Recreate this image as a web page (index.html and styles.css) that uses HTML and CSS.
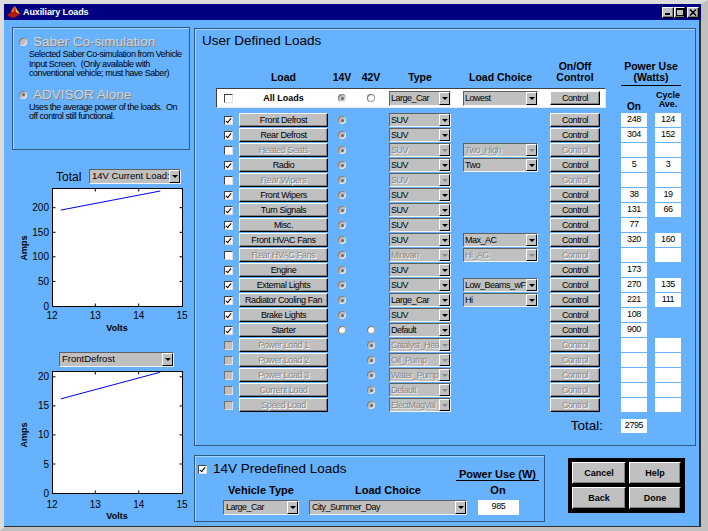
FILE: index.html
```html
<!DOCTYPE html>
<html lang="en">
<head>
<meta charset="utf-8">
<title>Auxiliary Loads</title>
<link rel="stylesheet" href="styles.css">
</head>
<body>
<div class="window">
  <header class="titlebar">
    <svg class="app-icon" width="13" height="12" viewBox="0 0 13 12">
      <polygon points="0,9 4,6 6,2 8,0 10,4 13,8 9,11 5,12" fill="#b01808"/>
      <polygon points="4,6 6,2 8,0 7,6" fill="#f07020"/>
      <polygon points="8,0 10,4 13,8 9,6" fill="#ffd040"/>
    </svg>
    <span class="title-text">Auxiliary Loads</span>
    <div class="wbtns">
      <span class="wbtn wmin"></span>
      <span class="wbtn wmax"></span>
      <span class="wbtn wclose"><svg width="8" height="7" viewBox="0 0 8 7"><path d="M1 0.5 L7 6.5 M7 0.5 L1 6.5" stroke="#000" stroke-width="1.6"/></svg></span>
    </div>
  </header>

  <main class="client">
    <aside class="leftcol">
      <div class="frame mode-box">
        <div class="mode-row"><span class="rd"></span><span class="mode-label">Saber Co-simulation</span></div>
        <p class="mode-desc">Selected Saber Co-simulation from Vehicle<br>Input Screen.&nbsp; (Only available with<br>conventional vehicle; must have Saber)</p>
        <div class="mode-row second"><span class="rd sel"></span><span class="mode-label">ADVISOR Alone</span></div>
        <p class="mode-desc">Uses the average power of the loads.&nbsp; On<br>off control still functional.</p>
      </div>

      <div class="chart-head">
        <span class="chart-label">Total</span>
        <div class="dd dd-left dd-total"><span class="dd-t">14V Current Load:</span><span class="dd-b"></span></div>
      </div>
      <svg class="chart" width="186" height="150" viewBox="0 0 186 150">
        <rect x="48.5" y="4.5" width="130" height="118" fill="#fff" stroke="#000"/>
        <g stroke="#000">
          <path d="M91.3 122 V119.5 M134.7 122 V119.5 M91.3 5 V7.5 M134.7 5 V7.5"/>
          <path d="M49 97.4 H51.5 M49 72.8 H51.5 M49 48.3 H51.5 M49 23.7 H51.5 M178 97.4 H175.5 M178 72.8 H175.5 M178 48.3 H175.5 M178 23.7 H175.5"/>
        </g>
        <polyline points="56.7,26.1 156.3,7" fill="none" stroke="#0000ff" stroke-width="1"/>
        <g class="tick" text-anchor="end">
          <text x="45" y="125.5">0</text>
          <text x="45" y="101">50</text>
          <text x="45" y="76.3">100</text>
          <text x="45" y="51.7">150</text>
          <text x="45" y="27.2">200</text>
        </g>
        <g class="tick" text-anchor="middle">
          <text x="48" y="135">12</text>
          <text x="91.3" y="135">13</text>
          <text x="134.7" y="135">14</text>
          <text x="178" y="135">15</text>
        </g>
        <text class="axis-label" x="113" y="146.5" text-anchor="middle">Volts</text>
        <text class="axis-label" transform="translate(23,64) rotate(-90)" text-anchor="middle">Amps</text>
      </svg>

      <div class="dd dd-left dd-load"><span class="dd-t">FrontDefrost</span><span class="dd-b"></span></div>
      <svg class="chart" width="186" height="159" viewBox="0 0 186 159">
        <rect x="48.5" y="4.5" width="130" height="122" fill="#fff" stroke="#000"/>
        <g stroke="#000">
          <path d="M91.3 126 V123.5 M134.7 126 V123.5 M91.3 5 V7.5 M134.7 5 V7.5"/>
          <path d="M49 97 H51.5 M49 67.9 H51.5 M49 38.9 H51.5 M49 9.8 H51.5 M178 97 H175.5 M178 67.9 H175.5 M178 38.9 H175.5 M178 9.8 H175.5"/>
        </g>
        <polyline points="56.7,31.9 156.3,5.2" fill="none" stroke="#0000ff" stroke-width="1"/>
        <g class="tick" text-anchor="end">
          <text x="45" y="129.5">0</text>
          <text x="45" y="100.5">5</text>
          <text x="45" y="71.4">10</text>
          <text x="45" y="42.4">15</text>
          <text x="45" y="13.3">20</text>
        </g>
        <g class="tick" text-anchor="middle">
          <text x="48" y="141">12</text>
          <text x="91.3" y="141">13</text>
          <text x="134.7" y="141">14</text>
          <text x="178" y="141">15</text>
        </g>
        <text class="axis-label" x="113" y="152" text-anchor="middle">Volts</text>
        <text class="axis-label" transform="translate(23,68) rotate(-90)" text-anchor="middle">Amps</text>
      </svg>
    </aside>

    <section class="rightcol">
      <div class="frame udl">
        <h1 class="panel-title">User Defined Loads</h1>
        <div class="loads">
          <div class="grow thead">
            <span class="h-load">Load</span>
            <span class="h-14">14V</span>
            <span class="h-42">42V</span>
            <span class="h-type">Type</span>
            <span class="h-choice">Load Choice</span>
            <span class="h-ctl">On/Off<br>Control</span>
            <span class="h-power">Power Use<br>(Watts)</span>
          </div>
          <div class="grow allrow">
            <span class="allbox"></span>
            <span class="cb"></span>
            <span class="all-label">All Loads</span>
            <span class="rd r14 sel"></span>
            <span class="rd r42 empty"></span>
            <div class="dd type"><span class="dd-t">Large_Car</span><span class="dd-b"></span></div>
            <div class="dd choice"><span class="dd-t">Lowest</span><span class="dd-b"></span></div>
            <span class="btn ctl">Control</span>
            <span class="h-on">On</span>
            <span class="h-cyc">Cycle<br>Ave.</span>
          </div>

          <div class="grow trow">
            <span class="cb chk"></span><span class="btn load">Front Defrost</span><span class="rd r14 sel"></span>
            <div class="dd type"><span class="dd-t">SUV</span><span class="dd-b"></span></div>
            <span class="btn ctl">Control</span><span class="fld on">248</span><span class="fld cyc">124</span>
          </div>
          <div class="grow trow">
            <span class="cb chk"></span><span class="btn load">Rear Defrost</span><span class="rd r14 sel"></span>
            <div class="dd type"><span class="dd-t">SUV</span><span class="dd-b"></span></div>
            <span class="btn ctl">Control</span><span class="fld on">304</span><span class="fld cyc">152</span>
          </div>
          <div class="grow trow">
            <span class="cb"></span><span class="btn load dis">Heated Seats</span><span class="rd r14 sel"></span>
            <div class="dd type dis"><span class="dd-t">SUV</span><span class="dd-b"></span></div>
            <div class="dd choice dis"><span class="dd-t">Two_High</span><span class="dd-b"></span></div>
            <span class="btn ctl dis">Control</span><span class="fld on"></span><span class="fld cyc"></span>
          </div>
          <div class="grow trow">
            <span class="cb chk"></span><span class="btn load">Radio</span><span class="rd r14 sel"></span>
            <div class="dd type"><span class="dd-t">SUV</span><span class="dd-b"></span></div>
            <div class="dd choice"><span class="dd-t">Two</span><span class="dd-b"></span></div>
            <span class="btn ctl">Control</span><span class="fld on">5</span><span class="fld cyc">3</span>
          </div>
          <div class="grow trow">
            <span class="cb"></span><span class="btn load dis">Rear Wipers</span><span class="rd r14 sel"></span>
            <div class="dd type dis"><span class="dd-t">SUV</span><span class="dd-b"></span></div>
            <span class="btn ctl dis">Control</span><span class="fld on"></span><span class="fld cyc"></span>
          </div>
          <div class="grow trow">
            <span class="cb chk"></span><span class="btn load">Front Wipers</span><span class="rd r14 sel"></span>
            <div class="dd type"><span class="dd-t">SUV</span><span class="dd-b"></span></div>
            <span class="btn ctl">Control</span><span class="fld on">38</span><span class="fld cyc">19</span>
          </div>
          <div class="grow trow">
            <span class="cb chk"></span><span class="btn load">Turn Signals</span><span class="rd r14 sel"></span>
            <div class="dd type"><span class="dd-t">SUV</span><span class="dd-b"></span></div>
            <span class="btn ctl">Control</span><span class="fld on">131</span><span class="fld cyc">66</span>
          </div>
          <div class="grow trow">
            <span class="cb chk"></span><span class="btn load">Misc.</span><span class="rd r14 sel"></span>
            <div class="dd type"><span class="dd-t">SUV</span><span class="dd-b"></span></div>
            <span class="btn ctl">Control</span><span class="fld on">77</span>
          </div>
          <div class="grow trow">
            <span class="cb chk"></span><span class="btn load">Front HVAC Fans</span><span class="rd r14 sel"></span>
            <div class="dd type"><span class="dd-t">SUV</span><span class="dd-b"></span></div>
            <div class="dd choice"><span class="dd-t">Max_AC</span><span class="dd-b"></span></div>
            <span class="btn ctl">Control</span><span class="fld on">320</span><span class="fld cyc">160</span>
          </div>
          <div class="grow trow">
            <span class="cb"></span><span class="btn load dis">Rear HVAC Fans</span><span class="rd r14 sel"></span>
            <div class="dd type dis"><span class="dd-t">Minivan</span><span class="dd-b"></span></div>
            <div class="dd choice dis"><span class="dd-t">Hi_AC</span><span class="dd-b"></span></div>
            <span class="btn ctl dis">Control</span><span class="fld on"></span><span class="fld cyc"></span>
          </div>
          <div class="grow trow">
            <span class="cb chk"></span><span class="btn load">Engine</span><span class="rd r14 sel"></span>
            <div class="dd type"><span class="dd-t">SUV</span><span class="dd-b"></span></div>
            <span class="btn ctl">Control</span><span class="fld on">173</span>
          </div>
          <div class="grow trow">
            <span class="cb chk"></span><span class="btn load">External Lights</span><span class="rd r14 sel"></span>
            <div class="dd type"><span class="dd-t">SUV</span><span class="dd-b"></span></div>
            <div class="dd choice"><span class="dd-t">Low_Beams_wF</span><span class="dd-b"></span></div>
            <span class="btn ctl">Control</span><span class="fld on">270</span><span class="fld cyc">135</span>
          </div>
          <div class="grow trow">
            <span class="cb chk"></span><span class="btn load">Radiator Cooling Fan</span><span class="rd r14 sel"></span>
            <div class="dd type"><span class="dd-t">Large_Car</span><span class="dd-b"></span></div>
            <div class="dd choice"><span class="dd-t">Hi</span><span class="dd-b"></span></div>
            <span class="btn ctl">Control</span><span class="fld on">221</span><span class="fld cyc">111</span>
          </div>
          <div class="grow trow">
            <span class="cb chk"></span><span class="btn load">Brake Lights</span><span class="rd r14 sel"></span>
            <div class="dd type"><span class="dd-t">SUV</span><span class="dd-b"></span></div>
            <span class="btn ctl">Control</span><span class="fld on">108</span>
          </div>
          <div class="grow trow">
            <span class="cb chk"></span><span class="btn load">Starter</span><span class="rd r14 empty"></span><span class="rd r42 empty"></span>
            <div class="dd type"><span class="dd-t">Default</span><span class="dd-b"></span></div>
            <span class="btn ctl">Control</span><span class="fld on">900</span>
          </div>
          <div class="grow trow">
            <span class="cb off"></span><span class="btn load dis">Power Load 1</span><span class="rd r42 sel"></span>
            <div class="dd type dis"><span class="dd-t">Catalyst_Hea</span><span class="dd-b"></span></div>
            <span class="btn ctl dis">Control</span><span class="fld on"></span><span class="fld cyc"></span>
          </div>
          <div class="grow trow">
            <span class="cb off"></span><span class="btn load dis">Power Load 2</span><span class="rd r42 sel"></span>
            <div class="dd type dis"><span class="dd-t">Oil_Pump</span><span class="dd-b"></span></div>
            <span class="btn ctl dis">Control</span><span class="fld on"></span><span class="fld cyc"></span>
          </div>
          <div class="grow trow">
            <span class="cb off"></span><span class="btn load dis">Power Load 3</span><span class="rd r42 sel"></span>
            <div class="dd type dis"><span class="dd-t">Water_Pump</span><span class="dd-b"></span></div>
            <span class="btn ctl dis">Control</span><span class="fld on"></span><span class="fld cyc"></span>
          </div>
          <div class="grow trow">
            <span class="cb off"></span><span class="btn load dis">Current Load</span><span class="rd r42 sel"></span>
            <div class="dd type dis"><span class="dd-t">Default</span><span class="dd-b"></span></div>
            <span class="btn ctl dis">Control</span><span class="fld on"></span><span class="fld cyc"></span>
          </div>
          <div class="grow trow">
            <span class="cb off"></span><span class="btn load dis">Speed Load</span><span class="rd r42 sel"></span>
            <div class="dd type dis"><span class="dd-t">ElectMagVal</span><span class="dd-b"></span></div>
            <span class="btn ctl dis">Control</span><span class="fld on"></span><span class="fld cyc"></span>
          </div>

          <div class="grow ttotal">
            <span class="total-label">Total:</span>
            <span class="fld on">2795</span>
          </div>
        </div>
      </div>

      <div class="bottom">
        <div class="frame pd">
          <div class="pd-head">
            <span class="cb chk"></span>
            <span class="pd-title">14V Predefined Loads</span>
            <span class="pd-power">Power Use (W)</span>
          </div>
          <div class="pd-grid">
            <span class="pd-lbl">Vehicle Type</span>
            <span class="pd-lbl">Load Choice</span>
            <span class="pd-lbl">On</span>
            <div class="dd"><span class="dd-t">Large_Car</span><span class="dd-b"></span></div>
            <div class="dd"><span class="dd-t">City_Summer_Day</span><span class="dd-b"></span></div>
            <span class="fld pd-fld">985</span>
          </div>
        </div>
        <div class="actions">
          <span class="btn act">Cancel</span>
          <span class="btn act">Help</span>
          <span class="btn act">Back</span>
          <span class="btn act">Done</span>
        </div>
      </div>
    </section>
  </main>
</div>
</body>
</html>
```

FILE: styles.css
```css
* { box-sizing: border-box; }
html, body { margin: 0; padding: 0; }
body {
  width: 708px; height: 531px; overflow: hidden;
  background: #c0c0c0;
  font-family: "Liberation Sans", Arial, sans-serif;
  color: #000;
}
.window {
  width: 708px; height: 531px;
  display: flex; flex-direction: column;
  border-style: solid;
  border-width: 4px 7px 4px 4px;
  border-color: #dcdcdc #c0c0c0 #c0c0c0 #dcdcdc;
  background: #c0c0c0;
}

/* title bar */
.titlebar {
  height: 16px;
  background: #000080;
  display: flex; align-items: center;
  padding: 0 2px 0 3px;
  flex: none;
}
.app-icon { flex: none; }
.title-text {
  margin-left: 3px;
  color: #fff; font-weight: bold; font-size: 9px; letter-spacing: -0.1px;
}
.wbtns { margin-left: auto; display: flex; align-items: center; }
.wbtn {
  width: 12px; height: 11px;
  background: #c0c0c0;
  border: 1px solid; border-color: #fff #000 #000 #fff;
  box-shadow: inset -1px -1px 0 #808080;
  display: flex; align-items: center; justify-content: center;
  position: relative;
}
.wmax { width: 11px; }
.wclose { margin-left: 2px; }
.wmin::after { content: ""; position: absolute; left: 2px; bottom: 2px; width: 5px; height: 2px; background: #000; }
.wmax::after { content: ""; width: 6px; height: 5px; border: 1px solid #000; border-top-width: 2px; }

/* client */
.client {
  flex: 1;
  background: #66b2ff;
  display: flex;
  border-right: 2px solid #303030;
  border-bottom: 1px solid #303030;
}
.leftcol { width: 186px; display: flex; flex-direction: column; flex: none; }
.rightcol { margin-left: 4px; padding-top: 8px; display: flex; flex-direction: column; }

.frame {
  border: 1px solid #2e5a84;
  box-shadow: inset 1px 1px 0 #a9d3ff;
}

/* condensed ui text (no narrow face installed: tighten spacing) */
.dd-t, .btn, .fld {
  font-size: 9px; letter-spacing: -0.4px;
}

/* mode box */
.mode-box {
  margin: 7px 0 0 8px;
  width: 178px; height: 123px;
  padding: 6px 0 0 6px;
}
.mode-row { display: flex; align-items: center; height: 16px; }
.mode-row.second { margin-top: 8px; }
.mode-label {
  margin-left: 6px;
  font-size: 13.5px; line-height: 16px;
  color: #d6d6d6;
  text-shadow: 1px 1px 0 #7a7a7a;
}
.mode-desc {
  margin: 0 0 0 10px;
  font-size: 9px; line-height: 9.5px; letter-spacing: -0.45px;
  white-space: nowrap;
}

/* radios */
.rd {
  width: 8px; height: 8px; border-radius: 50%;
  background: #c0c0c0;
  box-shadow: inset 1px 1px 0 #808080, inset -1px -1px 0 #e8e8e8;
  display: flex; align-items: center; justify-content: center;
  flex: none;
}
.rd.sel::after { content: ""; width: 3px; height: 3px; border-radius: 50%; background: #6a6a6a; }
.rd.empty { background: #fff; box-shadow: inset 1px 1px 0 #808080, inset 0 0 0 1px #9a9a9a; }

/* checkbox */
.cb {
  width: 9px; height: 9px;
  background: #fff;
  border: 1px solid; border-color: #404040 #e0e0e0 #e0e0e0 #404040;
  position: relative;
  flex: none;
}
.cb.off { background: #c0c0c0; border-color: #707070 #e0e0e0 #e0e0e0 #707070; }
.cb.chk::after {
  content: ""; position: absolute;
  left: 2px; top: 0px; width: 2px; height: 5px;
  border: solid #000; border-width: 0 1.5px 1.5px 0;
  transform: rotate(40deg);
}

/* dropdown */
.dd {
  display: flex;
  height: 14px;
  background: #c0c0c0;
  border: 1px solid; border-color: #606060 #f4f4f4 #f4f4f4 #606060;
}
.dd-t {
  flex: 1; min-width: 0;
  padding-left: 1px;
  line-height: 12px;
  letter-spacing: -0.5px;
  white-space: nowrap; overflow: hidden;
}
.dd-b {
  width: 11px; flex: none;
  background: #c0c0c0;
  border: 1px solid; border-color: #fff #000 #000 #fff;
  display: flex; align-items: center; justify-content: center;
}
.dd-b::after {
  content: "";
  border-left: 3px solid transparent; border-right: 3px solid transparent;
  border-top: 3px solid #000;
}
.dd.dis .dd-t { color: #8a8a8a; text-shadow: 1px 1px 0 #f0f0f0; }
.dd.dis .dd-b::after { border-top-color: #8a8a8a; }

/* buttons */
.btn {
  background: #c0c0c0;
  border: 1px solid; border-color: #fff #000 #000 #fff;
  box-shadow: inset -1px -1px 0 #808080;
  display: flex; align-items: center; justify-content: center;
  line-height: 12px;
  white-space: nowrap;
}
.btn.dis { color: #8a8a8a; text-shadow: 1px 1px 0 #fff; }

/* fields */
.fld {
  background: #fff;
  height: 14px;
  line-height: 12px;
  text-align: center;
}

/* left charts */
.chart-head { display: flex; align-items: center; margin-top: 19px; height: 15px; }
.chart-label { margin-left: 52px; font-size: 12px; width: 33px; }
.dd-left .dd-t { font-size: 9.5px; letter-spacing: 0; padding-left: 2px; }
.dd-total { width: 92px; height: 15px; }
.dd-load { width: 115px; height: 15px; margin: 18px 0 0 55px; }
.chart { display: block; flex: none; }
.tick text { font-family: "Liberation Sans", Arial, sans-serif; font-size: 10px; fill: #000; }
.axis-label { font-family: "Liberation Sans", Arial, sans-serif; font-size: 9px; font-weight: bold; fill: #000; }

/* user defined loads */
.udl { width: 502px; height: 418px; }
.panel-title {
  margin: 4px 0 0 7px;
  font-size: 13.5px; font-weight: normal; line-height: 16px;
}
.loads { margin: 11px 0 0 21px; }
.grow {
  display: grid;
  grid-template-columns: 23px 89px 28px 30px 74px 86px 60px 45px 40px;
}
.grow > * { grid-row: 1; }
.thead { height: 26px; align-items: end; font-weight: bold; font-size: 10.5px; line-height: 11px; text-align: center; }
.thead > span { margin-bottom: 3px; }
.h-load { grid-column: 2; }
.h-14 { grid-column: 3; }
.h-42 { grid-column: 4; }
.h-type { grid-column: 5; margin-left: 3px; width: 62px; }
.h-choice { grid-column: 6; margin-left: 3px; width: 75px; white-space: nowrap; }
.h-ctl { grid-column: 7; margin-left: 4px; width: 50px; }
.thead > .h-power {
  grid-column: 8 / 10; margin: 0 0 0 15px; width: 60px;
  padding-bottom: 2px; border-bottom: 1px solid #000;
}

.allrow { height: 20px; margin: 2px 0 5px; align-items: center; }
.allbox {
  grid-column: 1 / 8; align-self: stretch;
  background: #fff;
  border: 1px solid; border-color: #404040 #e8e8e8 #e8e8e8 #404040;
}
.allrow .cb { grid-column: 1; margin-left: 8px; }
.all-label { grid-column: 2; text-align: center; font-weight: bold; font-size: 9px; }
.allrow .dd { height: 15px; }
.allrow .ctl { height: 16px; }
.h-on { grid-column: 8; margin-left: 15px; width: 26px; text-align: center; align-self: end; margin-bottom: -4px; font-weight: bold; font-size: 10px; line-height: 11px; }
.h-cyc { grid-column: 9; margin-left: 4px; width: 26px; text-align: center; align-self: end; margin-bottom: -1px; font-weight: bold; font-size: 9px; line-height: 9px; white-space: nowrap; }

.trow { height: 14px; margin-bottom: 1px; align-items: center; }
.grow .cb { grid-column: 1; margin-left: 8px; }
.grow .load { grid-column: 2; height: 14px; }
.grow .r14 { grid-column: 3; justify-self: center; }
.grow .r42 { grid-column: 4; justify-self: center; }
.grow .type { grid-column: 5; margin-left: 3px; width: 62px; }
.grow .choice { grid-column: 6; margin-left: 3px; width: 75px; }
.grow .ctl { grid-column: 7; margin-left: 4px; width: 50px; height: 14px; }
.grow .on { grid-column: 8; margin-left: 15px; width: 26px; }
.grow .cyc { grid-column: 9; margin-left: 4px; width: 26px; }

.ttotal { margin-top: 7px; height: 14px; align-items: center; }
.total-label { grid-column: 7; justify-self: end; margin-right: 3px; font-size: 13.5px; line-height: 14px; }

/* bottom */
.bottom { display: flex; margin-top: 9px; }
.pd { width: 351px; height: 67px; padding: 5px 0 0 3px; }
.pd-head { display: flex; align-items: flex-start; height: 20px; }
.pd-head .cb { margin-top: 4px; }
.pd-title { margin-left: 6px; font-size: 13.5px; line-height: 16px; }
.pd-power {
  margin: 8px 5px 0 auto;
  width: 83px; text-align: center;
  border-bottom: 1px solid #000;
  font-weight: bold; font-size: 11px; line-height: 11px;
}
.pd-grid {
  display: grid;
  grid-template-columns: 76px 158px 42px;
  column-gap: 10px; row-gap: 4px;
  margin: 4px 0 0 25px;
}
.pd-grid .dd { height: 15px; }
.pd-grid .dd-t { padding-left: 2px; }
.pd-lbl { font-weight: bold; font-size: 11px; line-height: 11px; text-align: center; white-space: nowrap; }
.pd-fld { height: 15px; margin-left: 1px; }

.actions {
  margin: 3px 0 0 23px;
  background: #000;
  padding: 4px;
  display: grid;
  grid-template-columns: 54px 52px;
  grid-template-rows: 22px 22px;
  gap: 3px;
  align-self: flex-start;
}
.btn.act { font-weight: bold; font-size: 9px; letter-spacing: 0; }
```
